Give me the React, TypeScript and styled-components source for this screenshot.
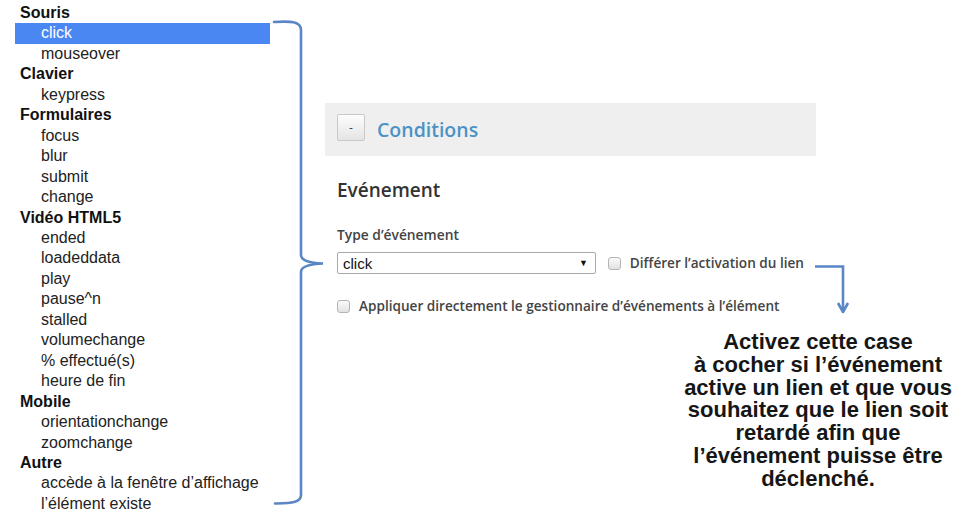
import React from "react";
import styled, { createGlobalStyle } from "styled-components";

const Global = createGlobalStyle`
  html, body { margin: 0; padding: 0; background: #fff; }
  body { width: 958px; height: 525px; overflow: hidden; }
`;

const Page = styled.div`
  position: relative;
  display: flex;
  align-items: flex-start;
  width: 958px;
  height: 525px;
`;

const EventList = styled.ul`
  list-style: none;
  margin: 3px 0 0 15px;
  padding: 0;
  width: 255px;
  font-family: "Liberation Sans", Arial, sans-serif;
  font-size: 16px;
`;

const Row = styled.li<{ $group?: boolean; $selected?: boolean }>`
  height: 20.46px;
  line-height: 20.46px;
  white-space: nowrap;
  padding-left: ${(p) => (p.$group ? "5px" : "26px")};
  font-weight: ${(p) => (p.$group ? 700 : 400)};
  color: ${(p) => (p.$selected ? "#fff" : p.$group ? "#111" : "#222")};
  background: ${(p) => (p.$selected ? "#4b87f3" : "transparent")};
`;

const BracketSvg = styled.svg`
  flex: none;
  width: 55px;
  height: 525px;
`;

const RightColumn = styled.div`
  flex: 1;
  display: flex;
  flex-direction: column;
  margin-top: 103px;
`;

const Panel = styled.section`
  width: 491px;
  font-family: "Open Sans", "Noto Sans", sans-serif;
`;

const HeaderBar = styled.div`
  display: flex;
  align-items: center;
  gap: 12px;
  height: 53px;
  padding: 0 12px;
  box-sizing: border-box;
  background: #efefef;
`;

const ToggleButton = styled.div`
  width: 28px;
  height: 27px;
  margin-bottom: 4px;
  box-sizing: border-box;
  border: 1px solid #c9c9c9;
  border-radius: 2px;
  background: linear-gradient(#fdfdfd, #e4e4e4);
  display: flex;
  align-items: center;
  justify-content: center;
  font-size: 12px;
  color: #444;
  line-height: 1;
`;

const HeaderTitle = styled.h2`
  margin: 0;
  font-size: 19.5px;
  font-weight: 600;
  color: #4b93c5;
`;

const Body = styled.div`
  padding: 0 12px;
`;

const SectionTitle = styled.h3`
  margin: 23px 0 0;
  font-size: 19px;
  line-height: 22px;
  font-weight: 600;
  color: #333;
`;

const FieldLabel = styled.div`
  margin-top: 25px;
  font-size: 13.8px;
  line-height: 18px;
  font-weight: 600;
  color: #444;
`;

const FieldRow = styled.div<{ $top: number }>`
  display: flex;
  align-items: center;
  margin-top: ${(p) => p.$top}px;
`;

const SelectBox = styled.div`
  width: 259px;
  height: 22px;
  box-sizing: border-box;
  border: 1px solid #a9a9a9;
  border-radius: 2px;
  display: flex;
  align-items: center;
  justify-content: space-between;
  padding: 0 7px 0 5px;
  font-family: "Liberation Sans", Arial, sans-serif;
  font-size: 15px;
  color: #111;
  margin-right: 12px;
`;

const Caret = styled.span`
  font-size: 9px;
  color: #111;
`;

const Check = styled.span`
  flex: none;
  width: 13px;
  height: 13px;
  box-sizing: border-box;
  border: 1px solid #b4b4b4;
  border-radius: 3px;
  background: linear-gradient(#fafafa, #e2e2e2);
  margin-right: 9px;
`;

const CheckLabel = styled.span`
  font-size: 13.6px;
  line-height: 18px;
  font-weight: 600;
  color: #444;
  white-space: nowrap;
`;

const Callout = styled.p`
  align-self: flex-end;
  width: 280px;
  margin: 16px 0 0;
  text-align: center;
  font-family: "Liberation Sans", Arial, sans-serif;
  font-weight: 700;
  font-size: 22px;
  line-height: 22.8px;
  color: #161616;
`;

const ArrowSvg = styled.svg`
  position: absolute;
  left: 812px;
  top: 258px;
  width: 42px;
  height: 60px;
`;

type Item = { label: string; group?: boolean; selected?: boolean };

const items: Item[] = [
  { label: "Souris", group: true },
  { label: "click", selected: true },
  { label: "mouseover" },
  { label: "Clavier", group: true },
  { label: "keypress" },
  { label: "Formulaires", group: true },
  { label: "focus" },
  { label: "blur" },
  { label: "submit" },
  { label: "change" },
  { label: "Vidéo HTML5", group: true },
  { label: "ended" },
  { label: "loadeddata" },
  { label: "play" },
  { label: "pause^n" },
  { label: "stalled" },
  { label: "volumechange" },
  { label: "% effectué(s)" },
  { label: "heure de fin" },
  { label: "Mobile", group: true },
  { label: "orientationchange" },
  { label: "zoomchange" },
  { label: "Autre", group: true },
  { label: "accède à la fenêtre d’affichage" },
  { label: "l’élément existe" },
];

export default function App() {
  return (
    <>
      <Global />
      <Page>
        <EventList>
          {items.map((it, i) => (
            <Row key={i} $group={it.group} $selected={it.selected}>
              {it.label}
            </Row>
          ))}
        </EventList>
        <BracketSvg viewBox="0 0 55 525">
          <path
            d="M4 22 C 20 21, 31 21, 31 30 L 31 255 C 31 261, 40 263, 53 263.5 C 40 264, 31 266, 31 272 L 31 495 C 31 503, 20 503, 5 503.5"
            fill="none"
            stroke="#5a86c5"
            strokeWidth="2.6"
            strokeLinecap="round"
          />
        </BracketSvg>
        <RightColumn>
          <Panel>
            <HeaderBar>
              <ToggleButton>-</ToggleButton>
              <HeaderTitle>Conditions</HeaderTitle>
            </HeaderBar>
            <Body>
              <SectionTitle>Evénement</SectionTitle>
              <FieldLabel>Type d’événement</FieldLabel>
              <FieldRow $top={8}>
                <SelectBox>
                  <span>click</span>
                  <Caret>▼</Caret>
                </SelectBox>
                <Check />
                <CheckLabel>Différer l’activation du lien</CheckLabel>
              </FieldRow>
              <FieldRow $top={23}>
                <Check />
                <CheckLabel>Appliquer directement le gestionnaire d’événements à l’élément</CheckLabel>
              </FieldRow>
            </Body>
          </Panel>
          <Callout>
            Activez cette case
            <br />à cocher si l’événement
            <br />active un lien et que vous
            <br />souhaitez que le lien soit
            <br />retardé afin que
            <br />l’événement puisse être
            <br />déclenché.
          </Callout>
        </RightColumn>
        <ArrowSvg viewBox="0 0 42 60">
          <path d="M3 8.5 L31 8.5 L31 53" fill="none" stroke="#5a86c5" strokeWidth="2.6" />
          <path d="M26 45 L31 54 L36 45" fill="none" stroke="#5a86c5" strokeWidth="2.6" strokeLinejoin="round" />
        </ArrowSvg>
      </Page>
    </>
  );
}
